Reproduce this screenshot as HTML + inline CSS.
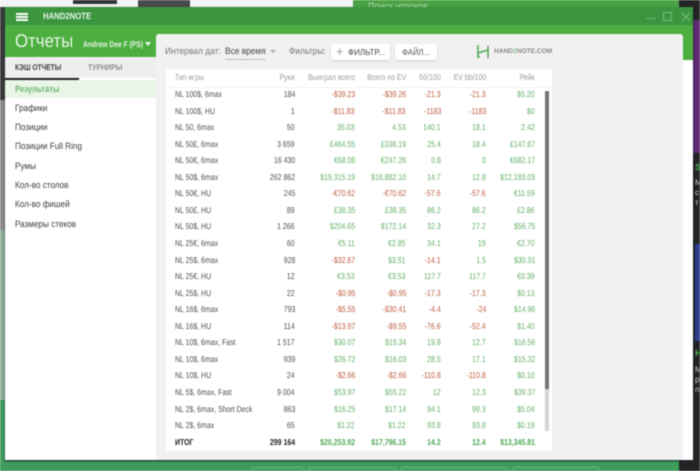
<!DOCTYPE html>
<html><head><meta charset="utf-8">
<style>
html,body{margin:0;padding:0}
html{background:#fff;width:700px;height:471px;overflow:hidden}
body{width:700px;height:471px;overflow:hidden;position:relative;background:#fff;font-family:"Liberation Sans",sans-serif;text-rendering:geometricPrecision;filter:blur(.4px)}
div{position:absolute;box-sizing:border-box;white-space:nowrap;transform-origin:left center}
.r{left:166px;width:386px;height:17px;font-size:8.6px;line-height:17px;color:#4f4f4f}
.r span{position:absolute;top:0;text-align:right;transform:scaleX(.81);transform-origin:right center}
.r .a{left:9px;text-align:left;transform-origin:left center}
.r .b{right:257px}.r .c{right:197px}.r .d{right:146px}.r .e{right:111px}.r .f{right:66px}.r .g{right:17px}
.g1{color:#64b068}.r1{color:#bd5a3c}
.h{color:#9c9c9c}
.t{font-weight:bold;color:#222}
.t .g1{color:#52a858}
.m{left:15px;font-size:9.2px;color:#3c3c3c;height:19px;line-height:19px;transform:scaleX(.89)}
</style></head><body>
<!-- background -->
<div style="left:0;top:0;width:700px;height:7px;background:#f4f4f4"></div>
<div style="left:73px;top:0;width:44px;height:4px;background:#333"></div>
<div style="left:138px;top:0;width:52px;height:7px;background:#4a4a4a"></div>
<div style="left:353px;top:0;width:327px;height:7px;background:#4aa344"></div>
<div style="left:368px;top:1px;font-size:9px;color:#b9dcb6;line-height:10px">Поиск игроков</div>
<div style="left:679px;top:0;width:21px;height:471px;background:#242424"></div>
<div style="left:693px;top:20px;width:7px;height:133px;background:#5f2a72"></div>
<div style="left:695px;top:162px;font-size:9px;color:#4caf50;font-weight:bold">S</div>
<div style="left:695px;top:178px;font-size:8px;line-height:10px;color:#ccc;white-space:pre">М
с
т</div>
<div style="left:695px;top:244px;width:5px;height:97px;background:#2c3f8f"></div>
<div style="left:695px;top:348px;font-size:9px;color:#4caf50;font-weight:bold">Н</div>
<div style="left:695px;top:365px;font-size:8px;line-height:10px;color:#ccc;white-space:pre">М
р
п</div>
<div style="left:0;top:7px;width:5px;height:453px;background:#3a3a3a"></div>
<div style="left:0;top:100px;width:5px;height:130px;background:#8d8d8d"></div>
<div style="left:0;top:230px;width:5px;height:230px;background:#8fb09a"></div>
<div style="left:0;top:400px;width:5px;height:71px;background:#3f9c5b"></div>
<div style="left:0;top:460px;width:679px;height:11px;background:#3f9c5b"></div>
<div style="left:252px;top:467px;width:52px;height:6px;border:1px solid #6db786;border-radius:2px"></div>
<div style="left:308px;top:467px;width:88px;height:6px;border:1px solid #6db786;border-radius:2px"></div>
<div style="left:401px;top:467px;width:106px;height:6px;border:1px solid #6db786;border-radius:2px"></div>
<div style="left:513px;top:467px;width:86px;height:6px;border:1px solid #6db786;border-radius:2px"></div>
<!-- window -->
<div style="left:5px;top:7px;width:688px;height:453px;background:#fff;box-shadow:0 1px 2px #123"></div>
<div style="left:5px;top:7px;width:688px;height:18px;background:#3c963f"></div>
<div style="left:5px;top:25px;width:688px;height:35px;background:#4caf3f"></div>
<!-- title bar -->
<div style="left:16px;top:13px;width:12px;height:2px;background:#fff"></div>
<div style="left:16px;top:16px;width:12px;height:2px;background:#fff"></div>
<div style="left:16px;top:19px;width:12px;height:2px;background:#fff"></div>
<div style="left:43px;top:10px;font-size:9px;line-height:12px;color:#e8f3e8;font-weight:bold;transform:scaleX(.86)">HAND2NOTE</div>
<div style="left:646px;top:18px;width:9px;height:1px;background:#6eb070"></div>
<div style="left:663px;top:12px;width:9px;height:9px;border:1px solid #7fbb82"></div>
<svg style="position:absolute;left:681px;top:12px" width="10" height="10"><path d="M1 1L9 9M9 1L1 9" stroke="#7fbb82" stroke-width="1"/></svg>
<div style="left:15px;top:30px;font-size:18.5px;line-height:22px;color:#e9f5e7;transform:scaleX(.91)">Отчеты</div>
<div style="left:83px;top:38px;font-size:8.4px;line-height:12px;color:#e4f2e2;font-weight:bold;transform:scaleX(.8)">Andrew Dee F (PS)</div>
<div style="left:145px;top:42px;width:0;height:0;border:3.5px solid transparent;border-top:4px solid #f0f8ee;border-bottom:0"></div>
<!-- sidebar -->
<div style="left:5px;top:57px;width:151px;height:21px;background:#eeeeee"></div>
<div style="left:5px;top:78px;width:74px;height:2px;background:#222"></div>
<div style="left:15px;top:61px;font-size:8.3px;line-height:12px;font-weight:bold;color:#3d3d3d;transform:scaleX(.8)">КЭШ ОТЧЕТЫ</div>
<div style="left:88px;top:61px;font-size:8.3px;line-height:12px;font-weight:bold;color:#8f8f8f;transform:scaleX(.83)">ТУРНИРЫ</div>
<div style="left:5px;top:80px;width:151px;height:18px;background:#e9f5e7"></div>
<div class="m" style="top:80px;color:#6fb872;font-weight:bold;transform:scaleX(.84)">Результаты</div>
<div class="m" style="top:99px">Графики</div>
<div class="m" style="top:118px">Позиции</div>
<div class="m" style="top:137px">Позиции Full Ring</div>
<div class="m" style="top:157px">Румы</div>
<div class="m" style="top:176px">Кол-во столов</div>
<div class="m" style="top:195px">Кол-во фишей</div>
<div class="m" style="top:215px">Размеры стеков</div>
<!-- main panel -->
<div style="left:156px;top:34px;width:527px;height:426px;background:#f1f1f1;border-radius:3px 3px 0 0"></div>
<div style="left:165px;top:45px;font-size:9.4px;line-height:12px;color:#777;transform:scaleX(.9)">Интервал дат:</div>
<div style="left:225px;top:45px;width:41px;font-size:9.4px;line-height:12px;color:#444;border-bottom:1px solid #bbb;padding-bottom:2px"><span style="display:inline-block;transform:scaleX(.89);transform-origin:left center">Все время</span></div>
<div style="left:270px;top:50px;width:0;height:0;border:3px solid transparent;border-top:3px solid #aaa;border-bottom:0"></div>
<div style="left:289px;top:45px;font-size:9.4px;line-height:12px;color:#777;transform:scaleX(.9)">Фильтры:</div>
<div style="left:331px;top:44px;width:59px;height:16px;background:#fff;border-radius:2px;box-shadow:0 1px 2px #ccc"></div>
<div style="left:336px;top:45px;font-size:13px;line-height:14px;color:#999">+</div>
<div style="left:348px;top:46px;font-size:8.6px;line-height:12px;color:#444;transform:scaleX(.93)">ФИЛЬТР...</div>
<div style="left:395px;top:44px;width:42px;height:16px;background:#fff;border-radius:2px;box-shadow:0 1px 2px #ccc"></div>
<div style="left:402px;top:46px;font-size:8.6px;line-height:12px;color:#555;transform:scaleX(.9)">ФАЙЛ...</div>
<svg style="position:absolute;left:476px;top:44px" width="14" height="15"><path d="M2 1V13H4M12 2V14M2 9L12 6" fill="none" stroke="#55a95a" stroke-width="1.6"/></svg>
<div style="left:494px;top:47px;font-size:6.6px;line-height:10px;font-weight:bold;color:#8a8a8a">HAND<span style="color:#7fbd82">2</span>NOTE.COM</div>
<!-- table -->
<div style="left:166px;top:69px;width:386px;height:382px;background:#fff;border-radius:2px"></div>
<div style="left:166px;top:87px;width:386px;height:1px;background:#f2f2f2"></div>
<div class="r h" style="top:69px"><span class="a">Тип игры</span><span class="b">Руки</span><span class="c">Выиграл всего</span><span class="d">Всего по EV</span><span class="e">бб/100</span><span class="f">EV bb/100</span><span class="g">Рейк</span></div>
<div class="r" style="top:86px"><span class="a">NL 100$, 6max</span><span class="b">184</span><span class="c r1">-$39.23</span><span class="d r1">-$39.26</span><span class="e r1">-21.3</span><span class="f r1">-21.3</span><span class="g g1">$5.20</span></div>
<div class="r" style="top:102.5px"><span class="a">NL 100$, HU</span><span class="b">1</span><span class="c r1">-$11.83</span><span class="d r1">-$11.83</span><span class="e r1">-1183</span><span class="f r1">-1183</span><span class="g g1">$0</span></div>
<div class="r" style="top:119px"><span class="a">NL 50, 6max</span><span class="b">50</span><span class="c g1">35.03</span><span class="d g1">4.53</span><span class="e g1">140.1</span><span class="f g1">18.1</span><span class="g g1">2.42</span></div>
<div class="r" style="top:135.6px"><span class="a">NL 50£, 6max</span><span class="b">3 659</span><span class="c g1">£464.55</span><span class="d g1">£336.19</span><span class="e g1">25.4</span><span class="f g1">18.4</span><span class="g g1">£147.67</span></div>
<div class="r" style="top:152.2px"><span class="a">NL 50€, 6max</span><span class="b">16 430</span><span class="c g1">€68.08</span><span class="d g1">€247.26</span><span class="e g1">0.8</span><span class="f g1">3</span><span class="g g1">€682.17</span></div>
<div class="r" style="top:168.8px"><span class="a">NL 50$, 6max</span><span class="b">262 862</span><span class="c g1">$19,315.19</span><span class="d g1">$16,882.10</span><span class="e g1">14.7</span><span class="f g1">12.8</span><span class="g g1">$12,183.03</span></div>
<div class="r" style="top:185.3px"><span class="a">NL 50€, HU</span><span class="b">245</span><span class="c r1">-€70.62</span><span class="d r1">-€70.62</span><span class="e r1">-57.6</span><span class="f r1">-57.6</span><span class="g g1">€11.59</span></div>
<div class="r" style="top:201.9px"><span class="a">NL 50£, HU</span><span class="b">89</span><span class="c g1">£38.35</span><span class="d g1">£38.35</span><span class="e g1">86.2</span><span class="f g1">86.2</span><span class="g g1">£2.86</span></div>
<div class="r" style="top:218.4px"><span class="a">NL 50$, HU</span><span class="b">1 266</span><span class="c g1">$204.65</span><span class="d g1">$172.14</span><span class="e g1">32.3</span><span class="f g1">27.2</span><span class="g g1">$56.75</span></div>
<div class="r" style="top:235px"><span class="a">NL 25€, 6max</span><span class="b">60</span><span class="c g1">€5.11</span><span class="d g1">€2.85</span><span class="e g1">34.1</span><span class="f g1">19</span><span class="g g1">€2.70</span></div>
<div class="r" style="top:251.5px"><span class="a">NL 25$, 6max</span><span class="b">928</span><span class="c r1">-$32.67</span><span class="d g1">$3.51</span><span class="e r1">-14.1</span><span class="f g1">1.5</span><span class="g g1">$30.31</span></div>
<div class="r" style="top:268px"><span class="a">NL 25€, HU</span><span class="b">12</span><span class="c g1">€3.53</span><span class="d g1">€3.53</span><span class="e g1">117.7</span><span class="f g1">117.7</span><span class="g g1">€0.39</span></div>
<div class="r" style="top:284.6px"><span class="a">NL 25$, HU</span><span class="b">22</span><span class="c r1">-$0.95</span><span class="d r1">-$0.95</span><span class="e r1">-17.3</span><span class="f r1">-17.3</span><span class="g g1">$0.13</span></div>
<div class="r" style="top:301.2px"><span class="a">NL 16$, 6max</span><span class="b">793</span><span class="c r1">-$5.55</span><span class="d r1">-$30.41</span><span class="e r1">-4.4</span><span class="f r1">-24</span><span class="g g1">$14.96</span></div>
<div class="r" style="top:317.8px"><span class="a">NL 16$, HU</span><span class="b">114</span><span class="c r1">-$13.97</span><span class="d r1">-$9.55</span><span class="e r1">-76.6</span><span class="f r1">-52.4</span><span class="g g1">$1.40</span></div>
<div class="r" style="top:334.3px"><span class="a">NL 10$, 6max, Fast</span><span class="b">1 517</span><span class="c g1">$30.07</span><span class="d g1">$19.34</span><span class="e g1">19.8</span><span class="f g1">12.7</span><span class="g g1">$16.56</span></div>
<div class="r" style="top:350.8px"><span class="a">NL 10$, 6max</span><span class="b">939</span><span class="c g1">$26.72</span><span class="d g1">$16.03</span><span class="e g1">28.5</span><span class="f g1">17.1</span><span class="g g1">$15.32</span></div>
<div class="r" style="top:367.4px"><span class="a">NL 10$, HU</span><span class="b">24</span><span class="c r1">-$2.66</span><span class="d r1">-$2.66</span><span class="e r1">-110.8</span><span class="f r1">-110.8</span><span class="g g1">$0.10</span></div>
<div class="r" style="top:384px"><span class="a">NL 5$, 6max, Fast</span><span class="b">9 004</span><span class="c g1">$53.97</span><span class="d g1">$55.22</span><span class="e g1">12</span><span class="f g1">12.3</span><span class="g g1">$39.37</span></div>
<div class="r" style="top:400.5px"><span class="a">NL 2$, 6max, Short Deck</span><span class="b">863</span><span class="c g1">$16.25</span><span class="d g1">$17.14</span><span class="e g1">94.1</span><span class="f g1">99.3</span><span class="g g1">$5.04</span></div>
<div class="r" style="top:417px"><span class="a">NL 2$, 6max</span><span class="b">65</span><span class="c g1">$1.22</span><span class="d g1">$1.22</span><span class="e g1">93.8</span><span class="f g1">93.8</span><span class="g g1">$0.19</span></div>
<div class="r t" style="top:433.5px"><span class="a">ИТОГ</span><span class="b">299 164</span><span class="c g1">$20,253.92</span><span class="d g1">$17,796.15</span><span class="e g1">14.2</span><span class="f g1">12.4</span><span class="g g1">$13,345.81</span></div>
<!-- scrollbar -->
<div style="left:544.5px;top:91px;width:4.5px;height:340px;background:#d4d4d4"></div>
<div style="left:544.5px;top:91px;width:4.5px;height:298px;background:#757575"></div>
</body></html>
